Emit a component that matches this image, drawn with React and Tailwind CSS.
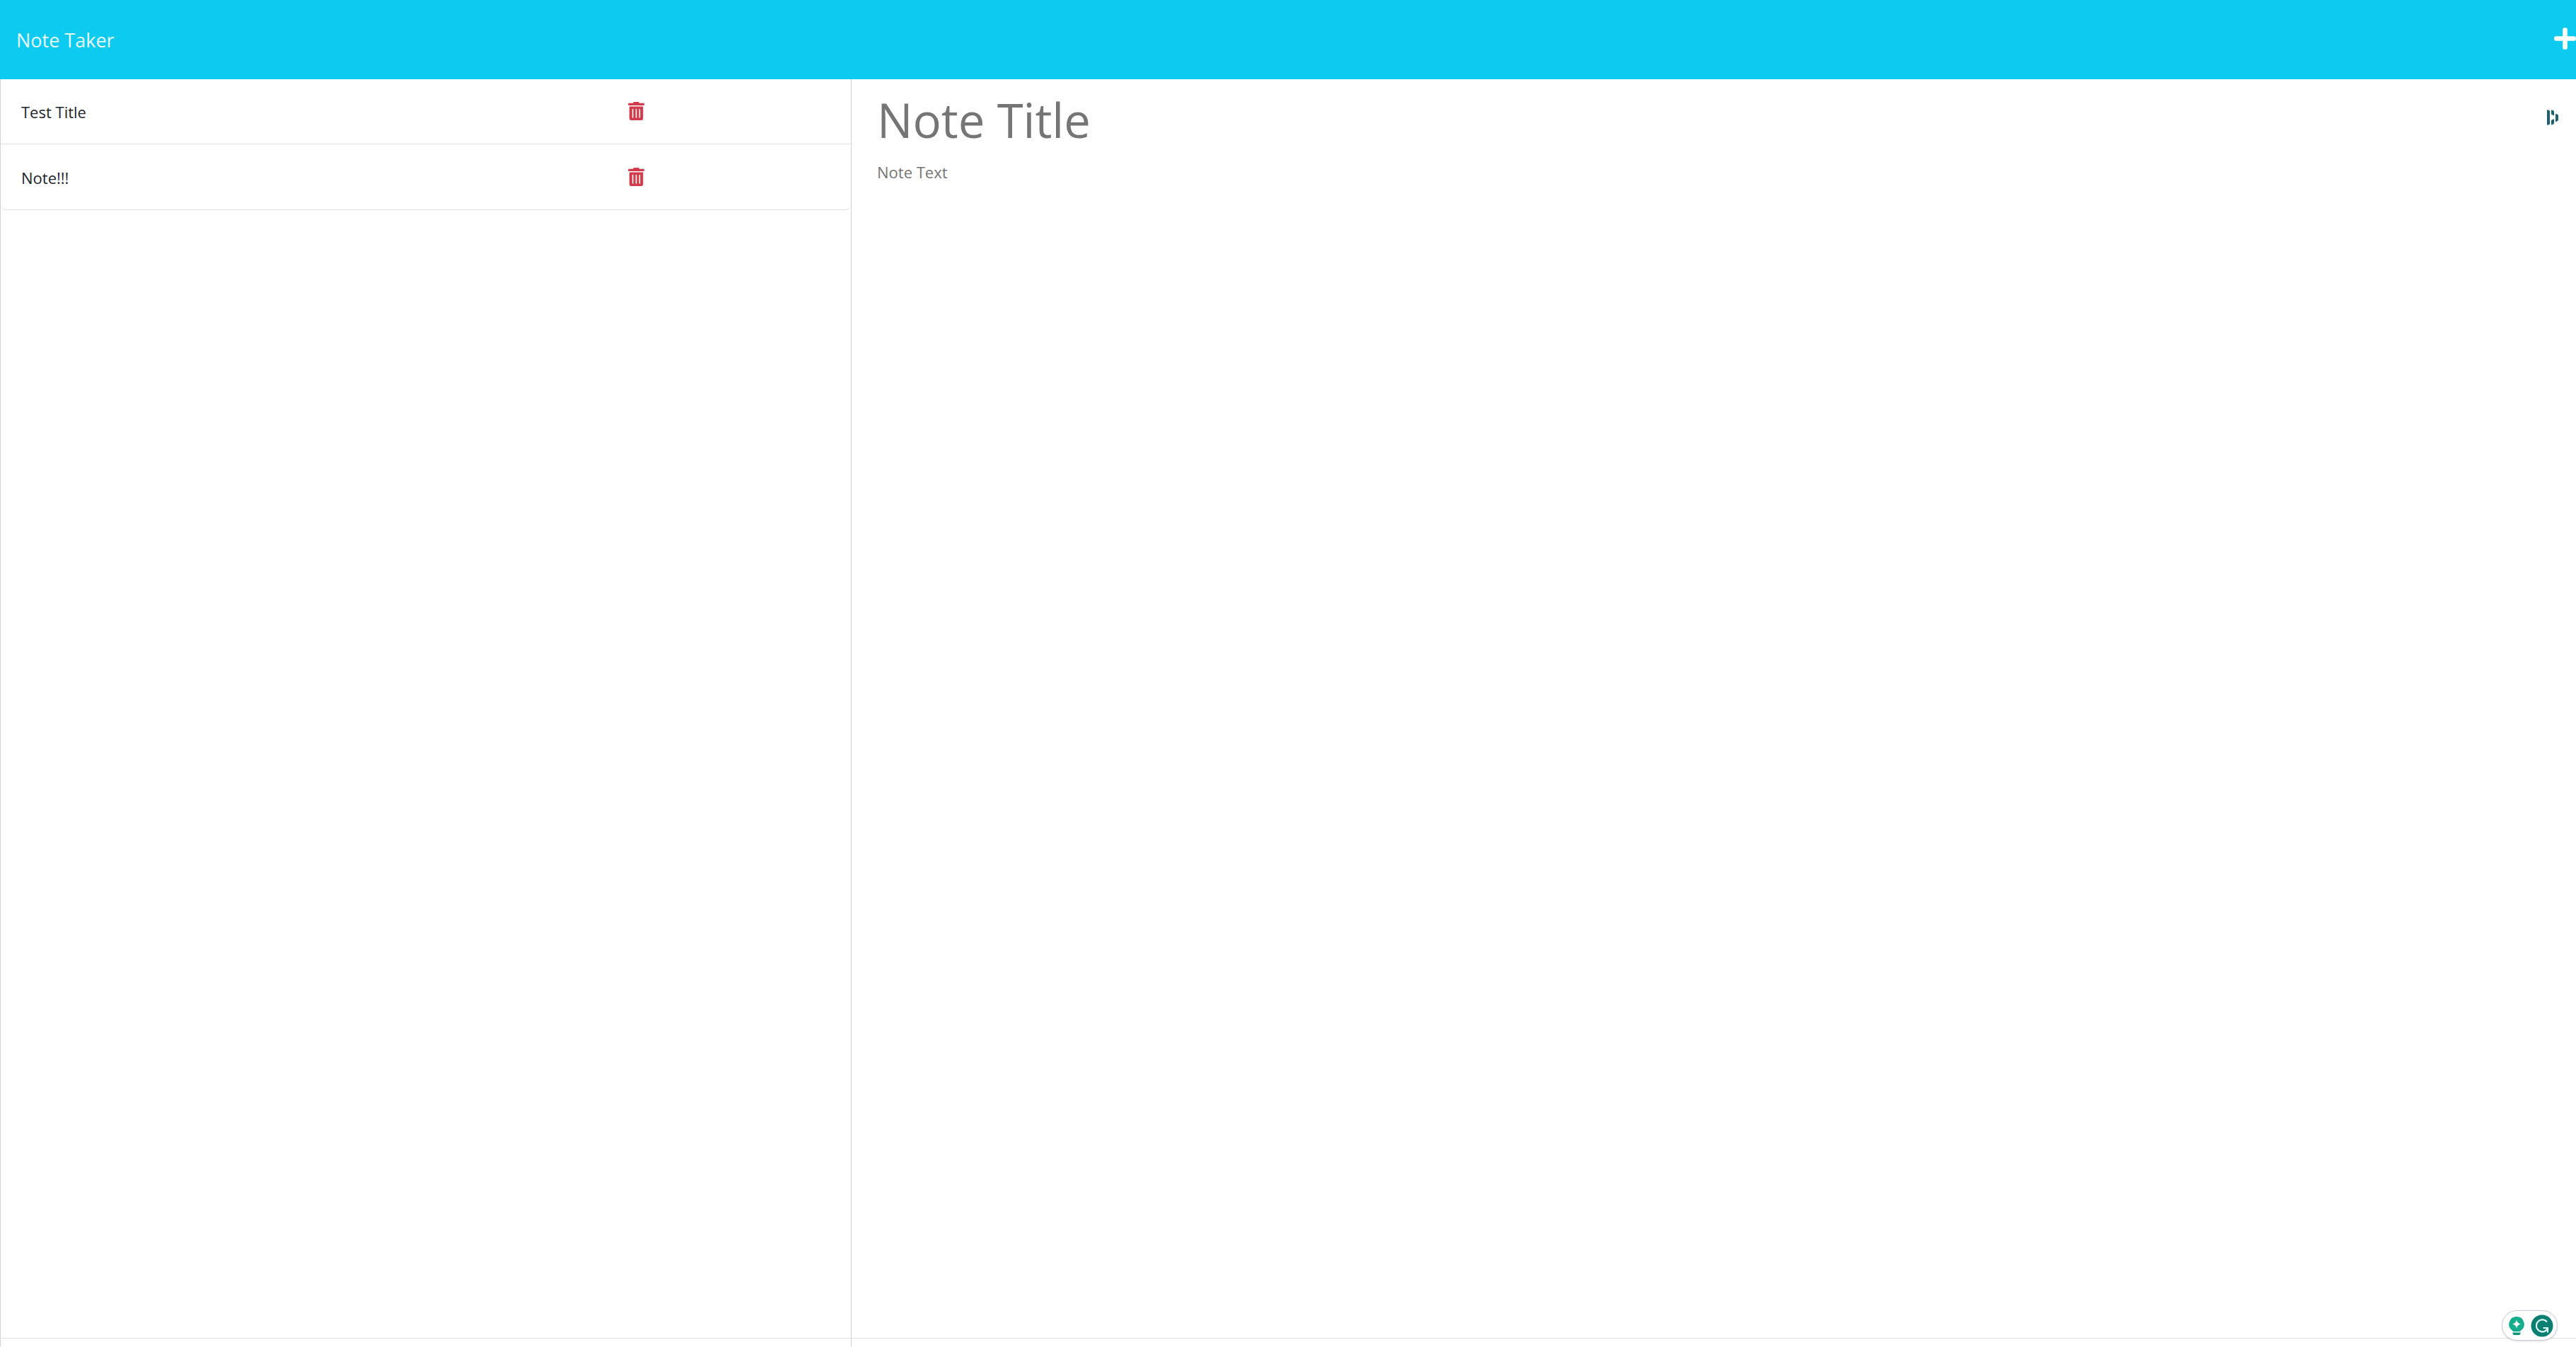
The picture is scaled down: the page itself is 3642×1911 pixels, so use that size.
import { FaPlus, FaTrashAlt } from "react-icons/fa";

const notes = ["Test Title", "Note!!!"];

function NoteRow({ title }) {
  return (
    <li className="flex h-[93px] items-center border-b border-[#dfdfdf] px-[29px] text-[#212529] last:rounded-b-lg">
      <button type="button" className="w-3/4 pt-0.5 text-left leading-9">
        {title}
      </button>
      <button type="button" aria-label={`Delete ${title}`} className="text-[#d13b4b]">
        <FaTrashAlt className="h-[26px] w-[23px]" />
      </button>
    </li>
  );
}

function FieldBars() {
  return (
    <svg viewBox="0 0 16 22" className="h-[22px] w-4" fill="#1d6070" aria-hidden="true">
      <path d="M0 1.2Q0 0 1.2 .3L3.2 1Q4 1.3 4 2V20Q4 20.7 3.2 21L1.2 21.7Q0 22 0 20.8Z" />
      <path d="M6 1.2Q6 0 7.2 .6L9.2 1.6Q10 2 10 2.8V7.4Q10 8.6 9 8L6.8 7Q6 6.600 6 5.800Z" />
      <path d="M6 15.600Q6 14.800 6.800 14.400L9 13.400Q10 13 10 14V19Q10 19.800 9.200 20.200L7.200 21.400Q6 22 6 20.800Z" />
      <path d="M12 6.800Q12 5.500 13.200 6.100L15.200 7.100Q16 7.500 16 8.300V14.500Q16 15.300 15.200 15.700L13.200 16.900Q12 17.500 12 16.200Z" />
    </svg>
  );
}

function WritingAssistant() {
  return (
    <div className="absolute right-[26px] bottom-4 flex h-[43px] items-center gap-[9px] rounded-full border border-[#c9ccd6] bg-white pr-[5px] pl-[9px] shadow-sm">
      <button type="button" aria-label="Writing suggestions">
        <svg viewBox="0 0 22 26" className="h-[26px] w-[22px]" aria-hidden="true">
          <path d="M11 0a10.700 10.700 0 0 0-6.500 19.200q1 .8 1.300 1.800h10.400q.3-1 1.300-1.800A10.700 10.700 0 0 0 11 0Z" fill="#14ad8b" />
          <path d="M5.500 22.500h11v.8q0 2.700-2.700 2.700H8.200q-2.700 0-2.700-2.700Z" fill="#079574" />
          <path d="M11 4.500q1 5 6 6-5 1-6 6-1-5-6-6 5-1 6-6Z" fill="#fff" />
        </svg>
      </button>
      <button type="button" aria-label="Open assistant">
        <svg viewBox="0 0 32 32" className="size-8" fill="none" aria-hidden="true">
          <circle cx="16" cy="16" r="15.500" fill="#087f70" />
          <path d="M23 10.500A8.500 8.500 0 1 0 21 23L24 20" stroke="#e3fffa" strokeWidth="2.200" />
          <path d="M17.500 19h6.500v6.500" stroke="#e3fffa" strokeWidth="2.200" />
        </svg>
      </button>
    </div>
  );
}

export default function App() {
  return (
    <div className="relative flex min-h-screen flex-col overflow-hidden bg-white pb-2 font-['Open_Sans','Noto_Sans',sans-serif] text-[22px]">
      <header className="flex h-[112px] items-center justify-between bg-[#0dcaf0] pl-[23px] text-white">
        <a href="#" className="pt-px text-[27px] leading-10 text-white/90">
          Note Taker
        </a>
        <button type="button" aria-label="New note" className="-mr-0.5 pb-1">
          <FaPlus className="size-[35px]" />
        </button>
      </header>

      <main className="grid flex-1 grid-cols-[1204fr_2438fr]">
        <aside className="border-x border-[#d3d3d3]" aria-label="Notes">
          <ul className="-mt-px">
            {notes.map((title) => (
              <NoteRow key={title} title={title} />
            ))}
          </ul>
        </aside>
        <section className="relative flex flex-col px-9 pt-3">
          <input
            type="text"
            aria-label="Note title"
            placeholder="Note Title"
            className="h-[90px] w-full text-[67px] outline-none placeholder:text-[#757575]"
          />
          <textarea
            aria-label="Note text"
            placeholder="Note Text"
            className="mt-[11px] w-full flex-1 resize-none leading-9 outline-none placeholder:text-[#757575]"
          />
          <div className="absolute top-[43px] right-[25px]">
            <FieldBars />
          </div>
        </section>
      </main>

      <footer className="grid h-3 grid-cols-[1204fr_2438fr] border-t border-[#dfdfdf]">
        <div className="border-x border-[#d3d3d3]" />
      </footer>
      <WritingAssistant />
    </div>
  );
}
